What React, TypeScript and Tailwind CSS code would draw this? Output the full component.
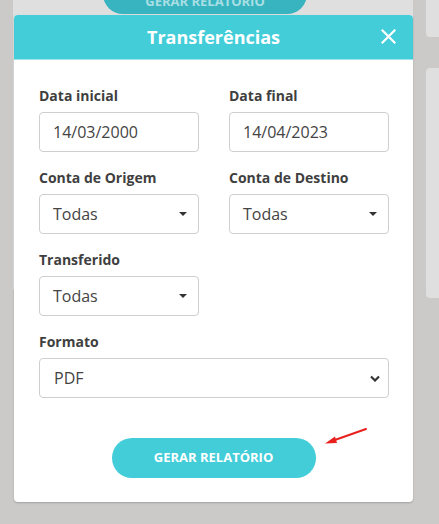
import React from "react";

const font = { fontFamily: '"Open Sans", "Noto Sans", sans-serif' };

function Caret() {
    return (
        <svg className="w-[8px] h-[4px]" viewBox="0 0 8 4" fill="#333">
            <path d="M0 0h8L4 4z" />
        </svg>
    );
}

function Field({ label, children, wide }: { label: string; children: React.ReactNode; wide?: boolean }) {
    return (
        <div className={wide ? "col-span-2" : ""}>
            <div className="text-[14px] font-bold text-[#3f3f3f] leading-[20px] mb-[6px]">{label}</div>
            {children}
        </div>
    );
}

function TextBox({ value }: { value: string }) {
    return (
        <div className="h-[40px] border border-[#cfcfcf] rounded-[4px] flex items-center px-[13px] text-[16px] text-[#444]">
            {value}
        </div>
    );
}

function Dropdown({ value }: { value: string }) {
    return (
        <div className="h-[40px] border border-[#cfcfcf] rounded-[4px] flex items-center justify-between pl-[13px] pr-[11px] text-[16px] text-[#444]">
            <span>{value}</span>
            <Caret />
        </div>
    );
}

export default function App() {
    return (
        <div className="relative w-[439px] h-[524px] overflow-hidden bg-[#cbcac8]" style={font}>
            {/* page behind the overlay */}
            <div className="flex h-full">
                <div className="w-[13px]" />
                <div className="w-[400px] h-[290px] bg-[#dfdfdf] relative">
                    <div className="absolute left-[90px] top-[-26px] w-[204px] h-[40px] rounded-full bg-[#37b4bf] flex items-end justify-center pb-[6px] leading-[14px] text-[13px] font-bold text-[#a9dfe4]">
                        GERAR RELATÓRIO
                    </div>
                </div>
                <div className="w-[13px]" />
                <div className="flex-1 flex flex-col gap-[31px]">
                    <div className="h-[37px] bg-[#dfdfdf] rounded-bl-[4px]" />
                    <div className="h-[230px] bg-[#dfdfdf] rounded-l-[4px]" />
                </div>
            </div>

            {/* modal */}
            <div className="absolute left-[14px] top-[15px] w-[399px] h-[487px] bg-white rounded-[4px] shadow-[0_1px_2px_rgba(0,0,0,0.2)] flex flex-col">
                <div className="relative h-[45px] bg-[#42cdd9] rounded-t-[4px] border-b border-[#9fe3ea] flex items-center justify-center">
                    <span className="text-white text-[18px] font-bold">Transferências</span>
                    <svg className="absolute right-[17px] top-[14px] w-[15px] h-[15px]" viewBox="0 0 15 15" stroke="white" strokeWidth="2.2" strokeLinecap="square">
                        <path d="M1.5 1.5l12 12M13.5 1.5l-12 12" />
                    </svg>
                </div>

                <div className="grid grid-cols-2 gap-x-[30px] gap-y-[16px] pl-[25px] pr-[24px] pt-[26px]">
                    <Field label="Data inicial"><TextBox value="14/03/2000" /></Field>
                    <Field label="Data final"><TextBox value="14/04/2023" /></Field>
                    <Field label="Conta de Origem"><Dropdown value="Todas" /></Field>
                    <Field label="Conta de Destino"><Dropdown value="Todas" /></Field>
                    <Field label="Transferido"><Dropdown value="Todas" /></Field>
                    <div />
                    <Field label="Formato" wide>
                        <div className="h-[40px] border border-[#cfcfcf] rounded-[4px] flex items-center justify-between pl-[14px] pr-[8px] text-[16px] text-[#444]">
                            <span>PDF</span>
                            <svg className="w-[10px] h-[7px]" viewBox="0 0 10 7" fill="none" stroke="#333" strokeWidth="2.2">
                                <path d="M1 1.5l4 4 4-4" />
                            </svg>
                        </div>
                    </Field>
                </div>

                <div className="flex justify-center pt-[40px] relative">
                    <div className="w-[204px] h-[40px] rounded-full bg-[#42cdd9] flex items-center justify-center text-white text-[13px] font-bold">
                        GERAR RELATÓRIO
                    </div>
                    <svg className="absolute left-[308px] top-[30px] w-[50px] h-[20px]" viewBox="0 0 50 20" fill="none">
                        <path d="M44 1L10 13" stroke="#e8211e" strokeWidth="2" strokeLinecap="round" />
                        <path d="M3 15.5L13 8.5L15 15z" fill="#e8211e" />
                    </svg>
                </div>
            </div>
        </div>
    );
}
